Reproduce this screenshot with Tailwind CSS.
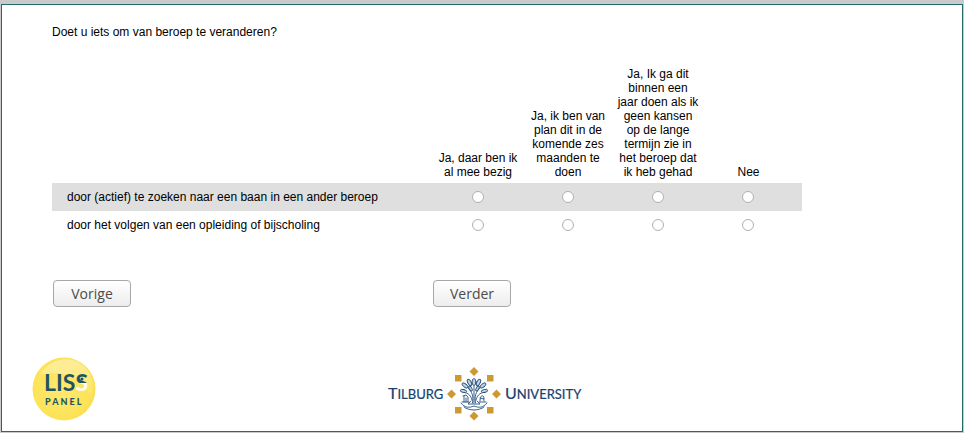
<!DOCTYPE html>
<html lang="nl">
<head>
<meta charset="utf-8">
<title>LISS Panel</title>
<script src="https://cdn.jsdelivr.net/npm/@tailwindcss/browser@4"></script>
</head>
<body class="flex min-h-screen bg-[#cacaca] pt-1 pr-px pb-px pl-px font-['Liberation_Sans',Arial,sans-serif] text-xs leading-[14px] text-black">
<main class="flex grow flex-col border border-[#236a6e] bg-white pt-5">
  <form class="ml-[50px] w-[750px] max-w-full">
    <p id="question">Doet u iets om van beroep te veranderen?</p>
    <table class="mt-7 w-full table-fixed border-collapse" aria-labelledby="question">
      <colgroup><col><col class="w-[90px]"><col class="w-[90px]"><col class="w-[90px]"><col class="w-[99px]"></colgroup>
      <thead>
        <tr class="align-bottom">
          <td></td>
          <th scope="col" class="px-1 pb-1 font-normal">Ja, daar ben ik al mee bezig</th>
          <th scope="col" class="px-1 pb-1 font-normal">Ja, ik ben van plan dit in de komende zes maanden te doen</th>
          <th scope="col" class="px-1 pb-1 font-normal">Ja, Ik ga dit binnen een jaar doen als ik geen kansen op de lange termijn zie in het beroep dat ik heb gehad</th>
          <th scope="col" class="pr-3 pb-1 pl-1 font-normal">Nee</th>
        </tr>
      </thead>
      <tbody>
        <tr class="h-7 bg-[#dfdfdf]">
          <th scope="row" class="pl-[15px] text-left font-normal">door (actief) te zoeken naar een baan in een ander beroep</th>
          <td><input type="radio" name="zoeken" aria-label="Zoeken: Ja, daar ben ik al mee bezig" class="mx-auto block size-3 appearance-none rounded-full border border-[#b0b0b0] bg-white checked:border-4 checked:border-[#236a6e]"></td>
          <td><input type="radio" name="zoeken" aria-label="Zoeken: Ja, ik ben van plan dit in de komende zes maanden te doen" class="mx-auto block size-3 appearance-none rounded-full border border-[#b0b0b0] bg-white checked:border-4 checked:border-[#236a6e]"></td>
          <td><input type="radio" name="zoeken" aria-label="Zoeken: Ja, ik ga dit binnen een jaar doen" class="mx-auto block size-3 appearance-none rounded-full border border-[#b0b0b0] bg-white checked:border-4 checked:border-[#236a6e]"></td>
          <td class="pr-[9px]"><input type="radio" name="zoeken" aria-label="Zoeken: Nee" class="mx-auto block size-3 appearance-none rounded-full border border-[#b0b0b0] bg-white checked:border-4 checked:border-[#236a6e]"></td>
        </tr>
        <tr class="h-7">
          <th scope="row" class="pl-[15px] text-left font-normal">door het volgen van een opleiding of bijscholing</th>
          <td><input type="radio" name="opleiding" aria-label="Opleiding: Ja, daar ben ik al mee bezig" class="mx-auto block size-3 appearance-none rounded-full border border-[#b0b0b0] bg-white checked:border-4 checked:border-[#236a6e]"></td>
          <td><input type="radio" name="opleiding" aria-label="Opleiding: Ja, ik ben van plan dit in de komende zes maanden te doen" class="mx-auto block size-3 appearance-none rounded-full border border-[#b0b0b0] bg-white checked:border-4 checked:border-[#236a6e]"></td>
          <td><input type="radio" name="opleiding" aria-label="Opleiding: Ja, ik ga dit binnen een jaar doen" class="mx-auto block size-3 appearance-none rounded-full border border-[#b0b0b0] bg-white checked:border-4 checked:border-[#236a6e]"></td>
          <td class="pr-[9px]"><input type="radio" name="opleiding" aria-label="Opleiding: Nee" class="mx-auto block size-3 appearance-none rounded-full border border-[#b0b0b0] bg-white checked:border-4 checked:border-[#236a6e]"></td>
        </tr>
      </tbody>
    </table>
    <div class="mt-[41px] grid grid-cols-[380px_1fr] pl-px">
      <button type="button" class="h-[27px] w-[78px] rounded border border-[#a8a8a8] bg-linear-to-b from-white to-[#ededed] font-['Open_Sans',sans-serif] text-sm text-[#4c4c4c]">Vorige</button>
      <button type="submit" class="h-[27px] w-[78px] rounded border border-[#a8a8a8] bg-linear-to-b from-white to-[#ededed] font-['Open_Sans',sans-serif] text-sm text-[#4c4c4c]">Verder</button>
    </div>
  </form>
  <footer class="mt-auto grid grid-cols-[1fr_auto_1fr] items-end pr-6 pb-2.5 pl-[30px]">
    <svg role="img" aria-label="LISS Panel" width="64" height="64" viewBox="0 0 64 64">
      <defs>
        <radialGradient id="disc" cx="45%" cy="50%" r="55%"><stop offset="0" stop-color="#ffe873"/><stop offset=".8" stop-color="#fde358"/><stop offset="1" stop-color="#fbdf50"/></radialGradient>
        <linearGradient id="shine" x1="0" y1="0" x2="0" y2="1"><stop offset="0" stop-color="#fff" stop-opacity=".4"/><stop offset="1" stop-color="#fff" stop-opacity=".05"/></linearGradient>
        <linearGradient id="figure" gradientUnits="userSpaceOnUse" x1="0" y1="14" x2="0" y2="34"><stop offset=".6" stop-color="#1f5560"/><stop offset=".6" stop-color="#fff"/></linearGradient>
      </defs>
      <circle cx="32" cy="32" r="31.500" fill="url(#disc)"/>
      <path d="M8 18C17 2 38-3 52 9C62 18 63 31 59 41C54 23 35 11 8 18Z" fill="url(#shine)"/>
      <g font-family="Lato, sans-serif" font-weight="700" fill="#1f5560">
        <text x="12" y="34" font-size="23">LIS<tspan fill="url(#figure)">S</tspan></text>
        <text x="13" y="48" font-size="9" font-weight="900" letter-spacing="2">PANEL</text>
      </g>
      <circle cx="50" cy="22" r="1.600" fill="#1f5560"/>
    </svg>
    <svg role="img" aria-label="Tilburg University" width="194" height="56" viewBox="0 0 194 56">
      <g font-family="Lato, sans-serif" fill="#17406f" stroke="#17406f" stroke-width=".2">
        <text x="0" y="34" font-size="16">T<tspan font-size="13">ILBURG</tspan></text>
        <text x="117" y="34" font-size="16">U<tspan font-size="13">NIVERSITY</tspan></text>
      </g>
      <g fill="#cc9933">
        <path d="M86 2l4.500 4.500-4.500 4.500-4.500-4.500ZM86 46.500l4.500 4.500-4.500 4.500-4.500-4.500ZM63.500 24.500l4.500 4.500-4.500 4.500-4.500-4.500ZM108.500 24.500l4.500 4.500-4.500 4.500-4.500-4.500Z"/>
        <path d="M67 10h6.500v6.500H67ZM99 10h6.500v6.500H99ZM67 42h6.500v6.500H67ZM99 42h6.500v6.500H99Z"/>
      </g>
      <g fill="none" stroke="#23507f" stroke-width=".9" stroke-linecap="round" stroke-linejoin="round">
        <path d="M84.500 38C85.500 32 85 27 79 22M87.500 38C86.500 32 87 27 93 22M86 38V18M84 35C83 31 81 28 75 27M88 35C89 31 91 28 97 27"/>
        <g fill="#c5d2e0">
          <ellipse cx="86" cy="17" rx="1.900" ry="3.500"/>
          <ellipse cx="81.500" cy="17.500" rx="1.700" ry="3.500" transform="rotate(-28 81.500 17.500)"/>
          <ellipse cx="90.500" cy="17.500" rx="1.700" ry="3.500" transform="rotate(28 90.500 17.500)"/>
          <ellipse cx="77" cy="20.500" rx="1.700" ry="3.500" transform="rotate(-50 77 20.500)"/>
          <ellipse cx="95" cy="20.500" rx="1.700" ry="3.500" transform="rotate(50 95 20.500)"/>
          <ellipse cx="75.500" cy="26" rx="1.500" ry="3.300" transform="rotate(-78 75.500 26)"/>
          <ellipse cx="96.500" cy="26" rx="1.500" ry="3.300" transform="rotate(78 96.500 26)"/>
          <ellipse cx="82.500" cy="23.500" rx="1.300" ry="2.700" transform="rotate(-30 82.500 23.500)"/>
          <ellipse cx="89.500" cy="23.500" rx="1.300" ry="2.700" transform="rotate(30 89.500 23.500)"/>
        </g>
        <path d="M75 31l3-1 2 2v5M76 31v6M78 33v4M74 37h7M92 36c0-3 1-6 3-5s0 3 1 5M92 33l4 1M91 37h7M83 36l-3 3h12l-3-3"/>
        <path d="M73 38c4 5 8 5 13 3c5 2 9 2 13-3M76 42c5 4 15 4 20 0"/>
      </g>
    </svg>
  </footer>
</main>
</body>
</html>
